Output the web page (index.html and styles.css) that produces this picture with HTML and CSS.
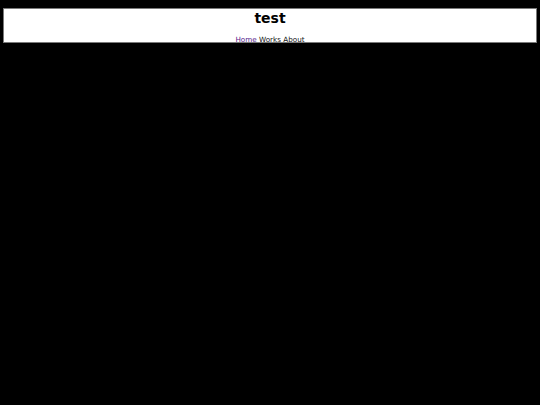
FILE: index.html
```html
<!DOCTYPE html>
<html>
<head>
<meta charset="utf-8">
<link rel="stylesheet" href="styles.css">
</head>
<body>
<header class="site-header">
  <h1 class="title">test</h1>
  <nav class="nav"><a class="nav-link current" href="#">Home</a> <span class="nav-link">Works</span> <span class="nav-link">About</span></nav>
</header>
</body>
</html>
```
FILE: styles.css
```css
html, body {
  margin: 0;
  padding: 0;
  background: #000;
  height: 100%;
}
body {
  padding: 8px 3px 0;
  font-family: "DejaVu Sans", sans-serif;
}
.site-header {
  background: #fff;
  border: 1px solid #7a7a7a;
  overflow: hidden;
  text-align: center;
  box-sizing: border-box;
  height: 35px;
}
.title {
  margin: 1px 0 0;
  font-size: 14px;
  line-height: 17px;
  font-weight: bold;
  color: #000;
}
.nav {
  margin-top: 8px;
  font-family: "DejaVu Sans", sans-serif;
  font-size: 7.2px;
  line-height: 9px;
  color: #111;
}
.nav-link.current {
  color: #551a8b;
  text-decoration: underline;
}
```
